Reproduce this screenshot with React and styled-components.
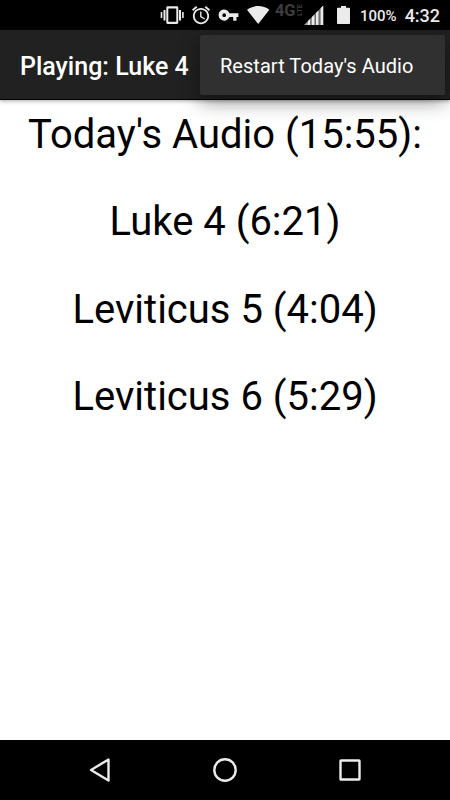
import React from 'react';
import styled, { createGlobalStyle } from 'styled-components';

const Colors = {
  bar: '#212121',
  menu: '#303030',
  icon: '#ebebeb',
  network: '#3d3d3d',
};

const GlobalStyle = createGlobalStyle`
  body{
    margin:0;
    background-color:#fff;
    font-family:Roboto, sans-serif;
  }
`

const Screen = styled.div`
  display:flex;
  flex-direction:column;
  height:100vh;
  overflow:hidden;
`

const StatusBar = styled.div`
  display:flex;
  align-items:center;
  box-sizing:border-box;
  height:30px;
  padding-left:160px;
  background-color:#000;
  svg{
    display:block;
    flex:none;
    fill:${Colors.icon};
  }
`

const StatusIcon = styled.svg.attrs({ height: 30 })`
  margin-right:${({ $gap }) => $gap || 0}px;
`

const StatusText = styled.span`
  margin-left:${({ $left }) => $left}px;
  padding-top:2px;
  color:${Colors.icon};
  font-size:${({ $size }) => $size}px;
  font-weight:500;
  line-height:28px;
  white-space:nowrap;
`

const Toolbar = styled.header`
  position:relative;
  display:flex;
  align-items:center;
  box-sizing:border-box;
  height:70px;
  padding:4px 20px 0;
  background-color:${Colors.bar};
  border-bottom:1px solid #000;
  box-shadow:0 1px 4px rgba(0, 0, 0, .35);
  h1{
    margin:0;
    color:#fff;
    font-size:25px;
    font-weight:500;
    line-height:30px;
    white-space:nowrap;
  }
`

const Menu = styled.div`
  position:absolute;
  top:5px;
  right:5px;
  display:flex;
  align-items:center;
  box-sizing:border-box;
  width:245px;
  height:60px;
  padding:2px 20px 0;
  border-radius:2px;
  background-color:${Colors.menu};
  box-shadow:0 6px 20px rgba(0, 0, 0, .45);
  color:#fff;
  font-size:20px;
  letter-spacing:.04px;
  white-space:nowrap;
`

const Playlist = styled.main`
  flex:1;
  padding-top:10.7px;
  text-align:center;
`

const Track = styled.p`
  margin:0 0 40.5px;
  color:#000;
  font-size:40px;
  line-height:47px;
  white-space:nowrap;
`

const NavBar = styled.nav`
  display:grid;
  grid-template-columns:repeat(3, 125px);
  justify-content:center;
  align-items:center;
  height:60px;
  background-color:#000;
  svg{
    display:block;
    margin:0 auto;
    fill:none;
    stroke:${Colors.icon};
    stroke-width:2.4;
    stroke-linejoin:round;
  }
`

const tracks = ["Today's Audio (15:55):", 'Luke 4 (6:21)', 'Leviticus 5 (4:04)', 'Leviticus 6 (5:29)'];

const VibrateIcon = () => (
  <StatusIcon width={24} $gap={8}>
    <path d="M.7 12h1.600v6H.7zM3.500 10h2v10.500h-2zM19 10h2v10.500h-2zM22.100 12h1.600v6h-1.600z" />
    <path fillRule="evenodd" d="M7.700 6.300h9.200a1.400 1.400 0 0 1 1.400 1.400v14.900a1.400 1.400 0 0 1-1.400 1.400H7.700a1.400 1.400 0 0 1-1.400-1.400V7.700a1.400 1.400 0 0 1 1.400-1.400zM8.300 8.500v13.300h8V8.500z" />
  </StatusIcon>
)

const AlarmIcon = () => (
  <StatusIcon width={18} viewBox="2 -4.9 20 33.33" $gap={8}>
    <path d="M22 5.72l-4.6-3.86-1.29 1.53 4.6 3.86L22 5.72zM7.88 3.39L6.6 1.86 2 5.71l1.29 1.53 4.59-3.85zM12.5 8H11v6l4.75 2.85.75-1.23-4-2.37V8zM12 4c-4.97 0-9 4.03-9 9s4.02 9 9 9c4.97 0 9-4.03 9-9s-4.03-9-9-9zm0 16c-3.87 0-7-3.13-7-7s3.13-7 7-7 7 3.13 7 7-3.13 7-7 7z" />
  </StatusIcon>
)

const KeyIcon = () => (
  <StatusIcon width={21} $gap={8}>
    <path fillRule="evenodd" d="M11.400 13.200A5.600 5.600 0 1 0 11.400 17H15.200v3.700h3.300V17h1.900v-3.800zM6.200 13.300a1.850 1.850 0 1 1 0 3.700 1.850 1.850 0 0 1 0-3.700z" />
  </StatusIcon>
)

const WifiIcon = () => (
  <StatusIcon width={23} $gap={5}>
    <path d="M11.200 24L0 9.700C3.200 7.300 7.200 6.100 11.200 6.100s8 1.200 11.200 3.600z" />
  </StatusIcon>
)

const NetworkIcon = styled.svg.attrs({ width: 28, height: 30 })`
  margin-right:1px;
  text{
    fill:${Colors.network};
    font-size:16px;
    font-weight:700;
  }
  text + text{
    font-size:7px;
    font-weight:700;
  }
`

const SignalIcon = () => (
  <StatusIcon width={20} $gap={13}>
    <path opacity=".7" d="M0 25L19.200 5.700V25z" />
    <path d="M4 21l2-2v6H4zM8 17l2-2v10H8zM12 13l2-2v14h-2zM16.800 8.100l2.400-2.400V25h-2.400z" />
    <path fill="#000" opacity=".45" d="M6.500 18h.8v7h-.8zM11 14h.8v11H11zM15.300 9h.9v16h-.9z" />
  </StatusIcon>
)

const BatteryIcon = () => (
  <StatusIcon width={13}>
    <path d="M4 6h5v1.800h3.200a.8.8 0 0 1 .8.8v14.600a.8.8 0 0 1-.8.8H.8a.8.8 0 0 1-.8-.8V8.600a.8.8 0 0 1 .8-.8H4z" />
  </StatusIcon>
)

export default function App() {
  return (
    <Screen>
      <GlobalStyle />
      <StatusBar>
        <VibrateIcon />
        <AlarmIcon />
        <KeyIcon />
        <WifiIcon />
        <NetworkIcon>
          <text x="0" y="15.700" textLength="20.500" lengthAdjust="spacingAndGlyphs">4G</text>
          <text transform="translate(26.500 16) rotate(-90)" textLength="12" lengthAdjust="spacingAndGlyphs">LTE</text>
        </NetworkIcon>
        <SignalIcon />
        <BatteryIcon />
        <StatusText $left={10} $size={15}>100%</StatusText>
        <StatusText $left={8} $size={18}>4:32</StatusText>
      </StatusBar>
      <Toolbar>
        <h1>Playing: Luke 4</h1>
        <Menu>Restart Today's Audio</Menu>
      </Toolbar>
      <Playlist>
        {tracks.map(track => <Track key={track}>{track}</Track>)}
      </Playlist>
      <NavBar>
        <svg width="24" height="26"><path d="M20.500 2.500v21L3 13z" /></svg>
        <svg width="26" height="26"><circle cx="13" cy="13" r="10.700" /></svg>
        <svg width="24" height="24"><rect x="2.500" y="2.500" width="19" height="19" rx=".5" /></svg>
      </NavBar>
    </Screen>
  )
}
